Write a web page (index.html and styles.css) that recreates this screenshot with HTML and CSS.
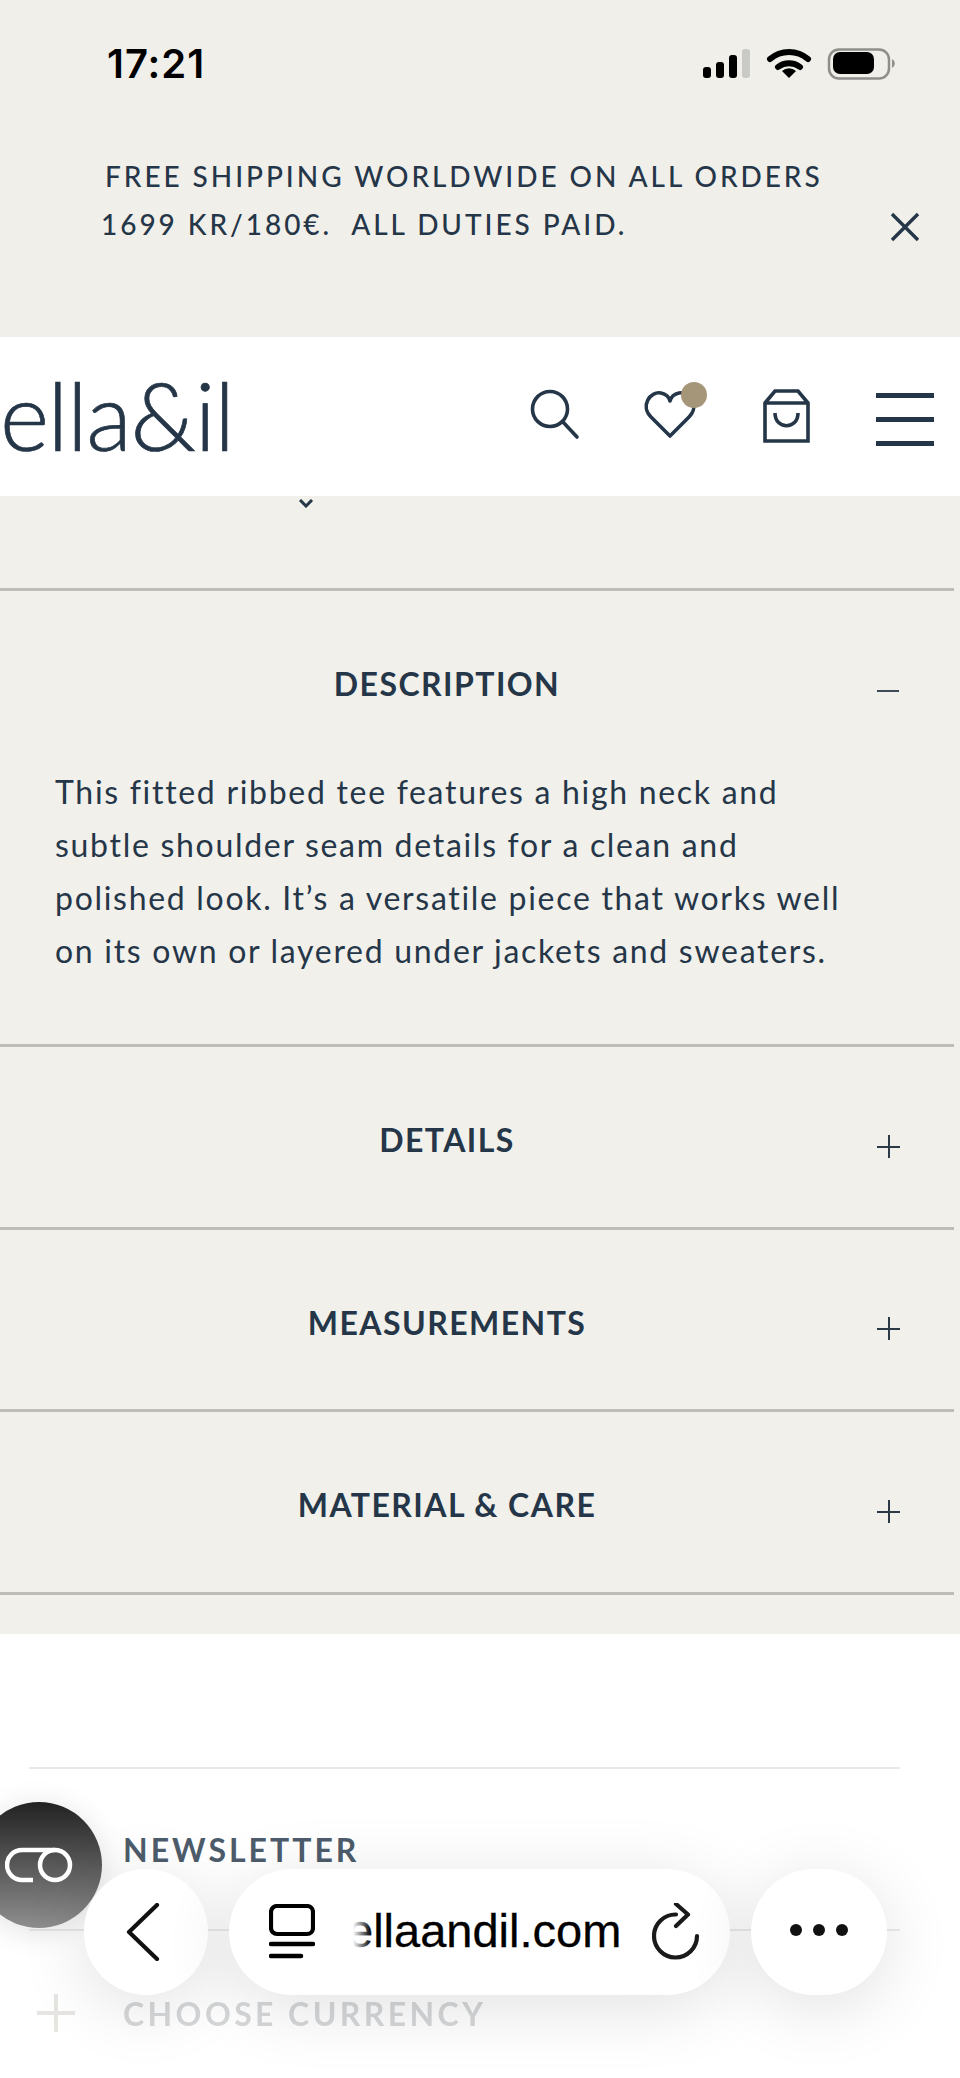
FILE: index.html
```html
<!DOCTYPE html>
<html lang="en">
<head>
    <meta charset="UTF-8">
    <meta name="viewport" content="width=device-width, initial-scale=1.0">
    <title>ella&amp;il - Description</title>
    <link rel="stylesheet" href="styles.css">
</head>
<body>

<div class="top">
    <div class="status">
        <span class="time">17:21</span>
        <svg class="status-icons" width="200" height="40" viewBox="0 0 200 40">
            <rect x="4" y="19" width="8" height="11" rx="3" fill="#000"/>
            <rect x="17" y="14" width="8" height="16" rx="3" fill="#000"/>
            <rect x="30" y="7" width="8" height="23" rx="3" fill="#000"/>
            <rect x="43" y="1" width="8" height="29" rx="3" fill="#c9c9c6"/>
            <path d="M71 11 A29 29 0 0 1 109 11" fill="none" stroke="#000" stroke-width="6" stroke-linecap="round"/>
            <path d="M79 19 A18 18 0 0 1 101 19" fill="none" stroke="#000" stroke-width="6" stroke-linecap="round"/>
            <path d="M90 30 L83 23 A10 10 0 0 1 97 23 Z" fill="#000"/>
            <rect x="130" y="1.5" width="60" height="29" rx="10" fill="none" stroke="#8e8e8a" stroke-width="2.5"/>
            <rect x="134" y="4" width="41" height="22" rx="7" fill="#000"/>
            <path d="M193 11 a5 5 0 0 1 0 9 Z" fill="#8e8e8a"/>
        </svg>
    </div>
    <div class="announce">
        <p class="announce-text"><span class="announce-first">FREE SHIPPING WORLDWIDE ON ALL ORDERS</span><br>1699 KR/180€.&nbsp; ALL DUTIES PAID.</p>
        <svg class="announce-close" width="30" height="30" viewBox="0 0 30 30">
            <path d="M2 2 L28 28 M28 2 L2 28" stroke="#253648" stroke-width="3.4" fill="none"/>
        </svg>
    </div>
</div>

<header class="site-header">
    <a class="logo">ella&amp;il</a>
    <svg class="header-icons" width="320" height="64" viewBox="0 0 320 64">
        <circle cx="43" cy="23" r="17.5" fill="none" stroke="#253648" stroke-width="3.6"/>
        <path d="M56 36 L70 51" stroke="#253648" stroke-width="3.6" stroke-linecap="round"/>
        <path d="M163 50 L144 31 C133 20 143 5 154 7 C159 8 162 11 163 15 C164 11 167 8 172 7 C183 5 193 20 182 31 Z" fill="none" stroke="#253648" stroke-width="3.6" stroke-linejoin="round"/>
        <circle cx="187" cy="9" r="13" fill="#a59579"/>
        <path d="M258 17 L268 5 H291 L301 17 V55 H258 Z M258 17 H301" fill="none" stroke="#253648" stroke-width="3.6"/>
        <path d="M268 27 C268 44 291 44 291 27" fill="none" stroke="#253648" stroke-width="3.6"/>
    </svg>
    <div class="menu-btn"><span></span><span></span><span></span></div>
</header>

<main class="content">
    <div class="variant-row">
        <svg width="16" height="9" viewBox="0 0 16 9"><path d="M2 1 L8 7 L14 1" fill="none" stroke="#253648" stroke-width="3"/></svg>
    </div>

    <section class="acc acc-open">
        <div class="acc-head">
            <h2 class="acc-title">DESCRIPTION</h2>
            <span class="minus"></span>
        </div>
        <p class="acc-body">This fitted ribbed tee features a high neck and<br>subtle shoulder seam details for a clean and<br>polished look. It’s a versatile piece that works well<br>on its own or layered under jackets and sweaters.</p>
    </section>

    <section class="acc">
        <div class="acc-head">
            <h2 class="acc-title">DETAILS</h2>
            <span class="plus"></span>
        </div>
    </section>
    <section class="acc">
        <div class="acc-head">
            <h2 class="acc-title">MEASUREMENTS</h2>
            <span class="plus"></span>
        </div>
    </section>
    <section class="acc">
        <div class="acc-head">
            <h2 class="acc-title">MATERIAL &amp; CARE</h2>
            <span class="plus"></span>
        </div>
    </section>
</main>

<footer class="site-footer">
    <div class="foot-row foot-news">
        <span class="foot-label">NEWSLETTER</span>
    </div>
    <div class="foot-row foot-currency">
        <span class="foot-plus"></span>
        <span class="foot-label">CHOOSE CURRENCY</span>
    </div>
</footer>

<div class="co-badge">
    <svg width="70" height="36" viewBox="0 0 70 36">
        <path d="M28 33 H17 A15 15 0 0 1 17 3 H50" fill="none" stroke="#fff" stroke-width="4.5"/>
        <circle cx="50" cy="18" r="15" fill="none" stroke="#fff" stroke-width="4.5"/>
    </svg>
</div>

<div class="toolbar">
    <div class="pill pill-back">
        <svg width="34" height="58" viewBox="0 0 34 58"><path d="M31 2 L3 29 L31 56" fill="none" stroke="#111" stroke-width="4.2" stroke-linecap="round" stroke-linejoin="round"/></svg>
    </div>
    <div class="pill pill-url">
        <svg class="tab-icon" width="46" height="56" viewBox="0 0 46 56">
            <rect x="2" y="2" width="42" height="28" rx="6" fill="none" stroke="#000" stroke-width="4.2"/>
            <path d="M2 40 H44 M2 52 H32" stroke="#000" stroke-width="4.6" stroke-linecap="round"/>
        </svg>
        <span class="url-text">ellaandil.com</span>
        <svg class="reload" width="48" height="58" viewBox="0 0 48 58">
            <path d="M45 33 A21.5 21.5 0 1 1 24 11.5" fill="none" stroke="#1a1a1a" stroke-width="4.2" stroke-linecap="round"/>
            <path d="M24 1 L36 11.5 L24 23" fill="none" stroke="#1a1a1a" stroke-width="4.2" stroke-linecap="round" stroke-linejoin="round"/>
        </svg>
    </div>
    <div class="pill pill-more"><i></i><i></i><i></i></div>
</div>

</body>
</html>
```

FILE: styles.css
```css
* {
    box-sizing: border-box;
}
html, body {
    margin: 0;
    padding: 0;
}
body {
    position: relative;
    width: 960px;
    height: 2078px;
    overflow: hidden;
    background: #fff;
    color: #253648;
    font-family: 'Lato', 'Liberation Sans', sans-serif;
}

/* top of the page */
.top {
    height: 337px;
    background: #f1efea;
}
.status {
    display: flex;
    justify-content: space-between;
    padding: 40px 60px 0 107px;
    height: 130px;
}
.time {
    font-family: 'Inter', 'Liberation Sans', sans-serif;
    font-size: 40px;
    font-weight: 600;
    line-height: 48px;
    letter-spacing: 1px;
    color: #000;
}
.status-icons {
    margin-top: 8px;
    margin-right: 1px;
}
.announce {
    display: flex;
    justify-content: space-between;
    padding: 22px 40px 0 101px;
}
.announce-text {
    margin: 0;
    font-size: 28px;
    line-height: 48px;
    font-weight: 500;
    letter-spacing: 2.95px;
}
.announce-first {
    margin-left: 4px;
}
.announce-close {
    margin-top: 60px;
}

/* header */
.site-header {
    display: flex;
    align-items: flex-start;
    height: 159px;
    background: #fff;
}
.logo {
    font-size: 94px;
    line-height: 150px;
    font-weight: 300;
    letter-spacing: -1.4px;
    -webkit-text-stroke: 0.7px #253648;
    color: #253648;
    margin-top: 3px;
    padding-left: 0;
    width: 290px;
    white-space: nowrap;
}
.header-icons {
    margin: 49px 0 0 217px;
    overflow: visible;
}
.menu-btn {
    display: flex;
    flex-direction: column;
    justify-content: space-between;
    width: 58px;
    height: 53px;
    margin: 56px 0 0 49px;
}
.menu-btn span {
    display: block;
    height: 5px;
    background: #253648;
}

/* accordion */
.content {
    background: #f1f0eb;
    height: 1138px;
}
.variant-row {
    width: 954px;
    height: 95px;
    padding: 3px 0 0 298px;
    border-bottom: 3px solid #bdbcb7;
    line-height: 0;
}
.acc {
    width: 954px;
    height: 182.5px;
    padding-top: 73px;
    border-bottom: 3px solid #bdbcb7;
}
.acc-open {
    height: 456px;
}
.acc-head {
    display: flex;
    align-items: center;
    height: 40px;
}
.acc-title {
    flex: 0 0 894px;
    margin: 0;
    text-align: center;
    font-size: 32px;
    line-height: 40px;
    font-weight: 700;
    letter-spacing: 1.45px;
    color: #253648;
}
.minus {
    width: 22px;
    height: 2px;
    margin: 14px 0 0 -17px;
    background: #3d4a57;
}
.plus {
    position: relative;
    width: 23px;
    height: 23px;
    margin: 12px 0 0 -17px;
}
.plus::before, .plus::after {
    content: "";
    position: absolute;
    background: #2c3a48;
}
.plus::before {
    left: 0;
    right: 0;
    top: 11px;
    height: 2px;
}
.plus::after {
    top: 0;
    bottom: 0;
    left: 11px;
    width: 2px;
}
.acc-body {
    margin: 61px 0 0 55px;
    font-size: 32px;
    line-height: 53px;
    letter-spacing: 1.7px;
    color: #253648;
}

/* footer */
.site-footer {
    padding: 133px 60px 0 29px;
}
.foot-row {
    display: flex;
    align-items: center;
    height: 164px;
}
.foot-news {
    border-top: 2px solid #e8e8e6;
    border-bottom: 2px solid #ececea;
    padding-left: 94px;
}
.foot-label {
    font-size: 32px;
    font-weight: 700;
    letter-spacing: 3px;
    color: #4d5c6b;
}
.foot-currency .foot-label {
    color: #d5d7d9;
    margin-left: 48px;
    letter-spacing: 3.4px;
    filter: blur(0.7px);
}
.foot-plus {
    position: relative;
    width: 38px;
    height: 38px;
    margin-left: 8px;
    filter: blur(0.7px);
}
.foot-plus::before, .foot-plus::after {
    content: "";
    position: absolute;
    background: #e6e5e1;
}
.foot-plus::before {
    left: 0;
    right: 0;
    top: 17px;
    height: 4px;
}
.foot-plus::after {
    top: 0;
    bottom: 0;
    left: 17px;
    width: 4px;
}

/* browser controls, they float over the page */
.co-badge {
    position: absolute;
    left: -24px;
    top: 1802px;
    width: 126px;
    height: 126px;
    border-radius: 50%;
    background: linear-gradient(#222, #8e8e8e);
    box-shadow: 0 4px 30px rgba(0, 0, 0, 0.12);
    display: flex;
    align-items: center;
    justify-content: flex-end;
    padding-right: 27px;
}
.toolbar {
    position: absolute;
    left: 84px;
    top: 1869px;
    display: flex;
    gap: 21px;
}
.pill {
    height: 126px;
    border-radius: 63px;
    background: #fff;
    box-shadow: 0 12px 70px rgba(0, 0, 0, 0.12);
    display: flex;
    align-items: center;
}
.pill-back {
    width: 124px;
    padding-left: 42px;
}
.pill-url {
    width: 501px;
    padding-left: 40px;
}
.url-text {
    position: relative;
    width: 290px;
    margin: -4px 0 0 20px;
    padding-left: 12px;
    font-family: 'Liberation Sans', sans-serif;
    font-size: 47px;
    -webkit-text-stroke: 0.3px #000;
    color: #000;
    white-space: nowrap;
    overflow: hidden;
}
.url-text::before {
    content: "";
    position: absolute;
    left: 0;
    top: 0;
    bottom: 0;
    width: 36px;
    background: linear-gradient(to right, #fff 50%, rgba(255, 255, 255, 0));
}
.reload {
    margin: 0 0 0 27px;
}
.pill-more {
    width: 136px;
    justify-content: center;
    gap: 11px;
    padding-bottom: 4px;
}
.pill-more i {
    display: block;
    width: 12px;
    height: 12px;
    border-radius: 50%;
    background: #111;
}
```
